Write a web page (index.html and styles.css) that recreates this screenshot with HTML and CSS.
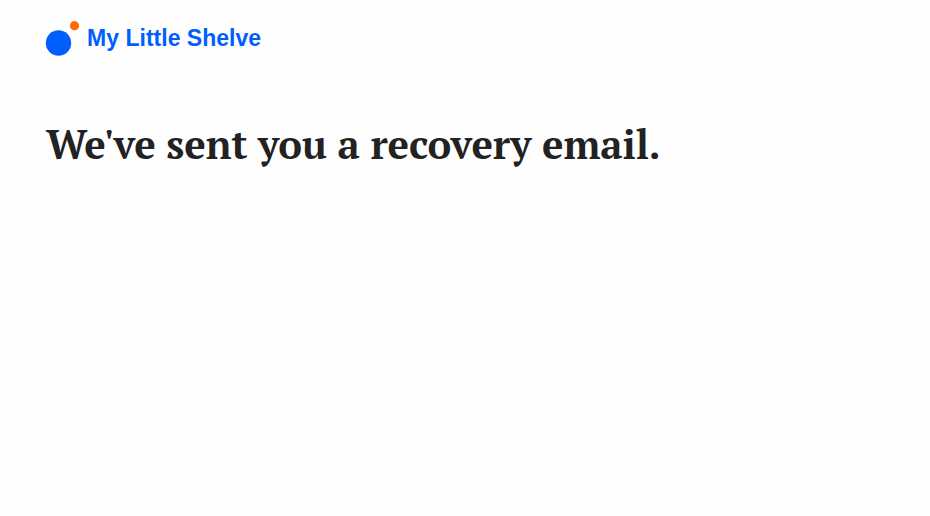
FILE: index.html
```html
<!DOCTYPE html>
<html lang="en">
<head>
<meta charset="utf-8">
<title>My Little Shelve</title>
<link rel="stylesheet" href="styles.css">
</head>
<body>
<header class="brand">
<svg class="logo" viewBox="0 0 34 36" aria-hidden="true"><circle cx="12.5" cy="23" r="12.7" fill="#005eff"/><circle cx="28.5" cy="5.7" r="4.6" fill="#ff6a00"/></svg>
<span class="name">My Little Shelve</span>
</header>
<main>
<h1 class="title">We've sent you a recovery email.</h1>
</main>
</body>
</html>
```

FILE: styles.css
```css
body {
  margin: 0;
  padding: 20px 46px;
  background: #fefefe;
  font-family: "Liberation Sans", Arial, sans-serif;
}
.brand {
  display: flex;
  height: 36px;
}
.logo {
  width: 34px;
  height: 36px;
  overflow: visible;
}
.name {
  margin-left: 7px;
  font-size: 23px;
  line-height: 36px;
  letter-spacing: 0.02px;
  font-weight: 700;
  color: #005eff;
  white-space: nowrap;
}
.title {
  margin: 60px 0 0;
  font: 700 40px/56px "PT Serif", "Noto Serif", "Liberation Serif", serif;
  letter-spacing: -0.1px;
  color: #222;
  white-space: nowrap;
}
```
